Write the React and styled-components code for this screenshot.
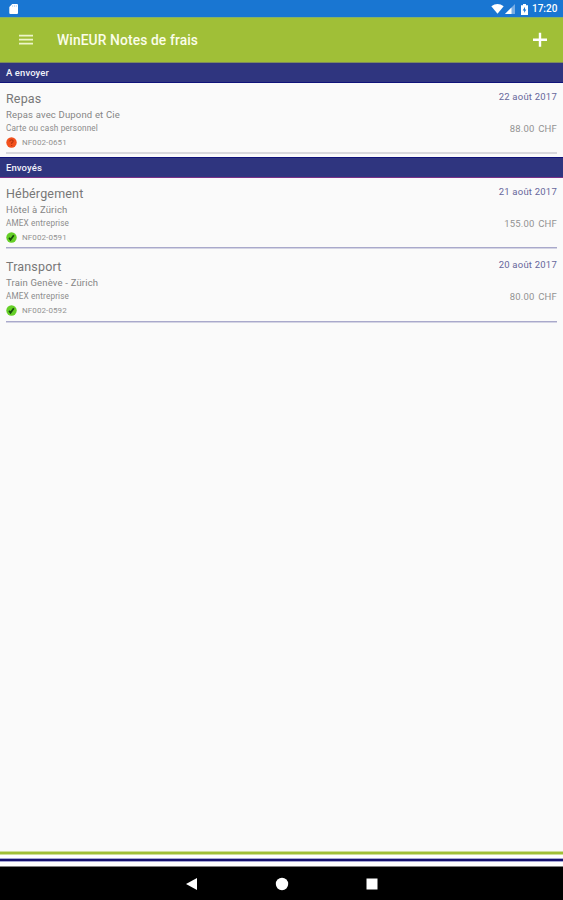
import React from 'react';
import styled, { createGlobalStyle } from 'styled-components';

const GlobalStyle = createGlobalStyle`
	body {
		margin: 0;
		background: #fafafa;
		font-family: Roboto, sans-serif;
	}

	* {
		box-sizing: border-box;
	}
`;

const Screen = styled.div`
	display: flex;
	flex-direction: column;
	height: 900px;
	overflow: hidden;
`;

const StatusBar = styled.div`
	display: flex;
	align-items: center;
	flex: none;
	height: 17px;
	padding: 1px 5px 0 9px;
	background: #1976d2;
	color: #fff;
`;

const StatusIcons = styled.div`
	display: flex;
	align-items: center;
	margin-left: auto;
`;

const Clock = styled.span`
	width: 26px;
	margin-left: 4px;
	font-size: 10px;
	font-weight: 500;
	line-height: 16px;
	white-space: nowrap;
`;

const AppBar = styled.header`
	display: flex;
	align-items: center;
	flex: none;
	height: 46px;
	padding: 0 15px 0 19px;
	border-top: 1px solid #83b169;
	border-bottom: 1px solid #7d8c5b;
	background: #a0bf37;
`;

const Title = styled.h1`
	flex: 1;
	margin: 0 0 0 24px;
	color: #fbfde9;
	font-size: 13.8px;
	font-weight: 500;
	line-height: 20px;
	letter-spacing: 0.12px;
`;

const SectionHeader = styled.h2`
	flex: none;
	height: ${({ $height }) => $height}px;
	margin: 0;
	padding-left: 6px;
	border-top: ${({ $edge }) => ($edge === 'top' ? '1px solid #10137a' : 'none')};
	border-bottom: 1px solid ${({ $edge }) => ($edge === 'top' ? '#7b3188' : '#10137a')};
	background: #2f357f;
	color: #f2f2fa;
	font-size: 9.5px;
	font-weight: 500;
	line-height: ${({ $edge }) => ($edge === 'top' ? 19 : 20)}px;
	letter-spacing: 0.1px;
`;

const Expense = styled.article`
	display: grid;
	grid-template-columns: 1fr auto;
	grid-template-rows: 17px 14px 13px 15px;
	align-items: center;
	flex: none;
	height: 69px;
	margin: 0 6px;
	padding-top: 7px;

	/* stacked rows sit a little closer to the line above them */
	hr + & {
		padding-top: 6px;
	}
`;

const Name = styled.h3`
	margin: 0;
	color: #777;
	font-size: 12.5px;
	font-weight: 400;
	letter-spacing: 0.17px;
`;

const ExpenseDate = styled.span`
	margin-top: -5px;
	color: #66669a;
	font-size: 9.5px;
	letter-spacing: 0.22px;
	text-align: right;
`;

const Description = styled.span`
	grid-column: 1 / 3;
	color: #858585;
	font-size: 9.5px;
	letter-spacing: 0.17px;
`;

const Payment = styled.span`
	color: #8b8b8b;
	font-size: 8.2px;
	letter-spacing: 0.15px;
`;

const Amount = styled.span`
	margin-top: 1px;
	color: #929292;
	font-size: 9.5px;
	letter-spacing: 0.2px;
	word-spacing: 1px;
	text-align: right;
`;

const Reference = styled.span`
	display: flex;
	align-items: center;
	gap: 5px;
	margin-top: 2px;
	color: #929292;
	font-size: 8px;
	letter-spacing: 0.1px;
`;

const Divider = styled.hr`
	flex: none;
	width: 551px;
	height: 2px;
	margin: 0 6px 3px;
	border: none;
	background: ${({ $sent }) =>
		$sent ? 'linear-gradient(#a9a9cb 50%, #d4d4e4 50%)' : '#d8d8dc'};
`;

const Footer = styled.footer`
	flex: none;
	height: 16px;
	margin-top: auto;
	border-bottom: 1px solid #808080;
	background: #fff;
`;

const Stripe = styled.div`
	height: 4px;
	margin-bottom: 3px;
	border: 1px solid ${({ $edge }) => $edge};
	border-width: 1px 0;
	background: ${({ $color }) => $color};
`;

const NavBar = styled.nav`
	display: flex;
	align-items: center;
	justify-content: center;
	gap: 76px;
	flex: none;
	height: 33px;
	background: #000;
`;

const SdCardIcon = () => (
	<svg width="10" height="12" viewBox="0 0 10 12">
		<path d="M3.2 1H8q1 0 1 1v8q0 1-1 1H1.3q-1 0-1-1V4z" fill="#fff" />
		<path d="M3.6 2v2M5.5 2v2M7.3 2v2" stroke="#9fc7ee" strokeWidth=".6" />
	</svg>
);

const WifiIcon = () => (
	<svg width="13" height="10" viewBox="0 0 13 10">
		<path d="M.3 2.2Q6.5-2 12.7 2.2L6.5 9.8z" fill="#fff" />
	</svg>
);

const SignalIcon = styled.svg`
	margin-left: 1px;
`;

const BatteryIcon = styled.svg`
	margin-left: 5px;
`;

const MenuIcon = () => (
	<svg width="14" height="12" viewBox="0 0 14 12">
		<path d="M0 1.7h14M0 5.7h14M0 9.7h14" stroke="#edf5c9" strokeWidth="1.7" />
	</svg>
);

const PlusIcon = () => (
	<svg width="16" height="16" viewBox="0 0 16 16">
		<path d="M1 7.7h14M8 .7v14" stroke="#fff" strokeWidth="2.4" />
	</svg>
);

const StateIcon = ({ sent }) => (
	<svg width="11" height="11" viewBox="0 0 11 11">
		<circle cx="5.5" cy="5.5" r="5.2" fill={sent ? '#65cf27' : '#f3511d'} />
		{sent ? (
			<path
				d="M3.1 5.8L4.5 7.8L7.8 3.2"
				fill="none"
				stroke="#174d0c"
				strokeWidth="1.8"
			/>
		) : (
			<path
				d="M3.5 4.3Q5.5 1.8 7.2 3.8Q7.3 5 5.7 5.8V7M5.7 8v1"
				fill="none"
				stroke="#b8360e"
				strokeWidth="1.2"
			/>
		)}
	</svg>
);

const pending = [
	{
		id: 'NF002-0651',
		name: 'Repas',
		description: 'Repas avec Dupond et Cie',
		payment: 'Carte ou cash personnel',
		date: '22 août 2017',
		amount: '88.00 CHF',
	},
];

const sent = [
	{
		id: 'NF002-0591',
		name: 'Hébérgement',
		description: 'Hôtel à Zürich',
		payment: 'AMEX entreprise',
		date: '21 août 2017',
		amount: '155.00 CHF',
	},
	{
		id: 'NF002-0592',
		name: 'Transport',
		description: 'Train Genève - Zürich',
		payment: 'AMEX entreprise',
		date: '20 août 2017',
		amount: '80.00 CHF',
	},
];

const ExpenseRow = ({ data, isSent }) => (
	<>
		<Expense>
			<Name>{data.name}</Name>
			<ExpenseDate>{data.date}</ExpenseDate>
			<Description>{data.description}</Description>
			<Payment>{data.payment}</Payment>
			<Amount>{data.amount}</Amount>
			<Reference>
				<StateIcon sent={isSent} />
				{data.id}
			</Reference>
		</Expense>
		<Divider $sent={isSent} />
	</>
);

const App = () => (
	<Screen>
		<GlobalStyle />
		<StatusBar>
			<SdCardIcon />
			<StatusIcons>
				<WifiIcon />
				<SignalIcon width="11" height="10" viewBox="0 0 11 10">
					<path d="M0 10L10 0v10z" fill="#78aee5" />
					<path d="M0 10L6.5 3.5V10z" fill="#fff" />
				</SignalIcon>
				<BatteryIcon width="7" height="11" viewBox="0 0 7 11">
					<path d="M2 0h3v1.2h2V11H0V1.2h2z" fill="#fff" />
					<path d="M4 2.8L1.7 6.5h1.5V9L5.3 5.4H4z" fill="#1976d2" />
				</BatteryIcon>
				<Clock>17:20</Clock>
			</StatusIcons>
		</StatusBar>
		<AppBar>
			<MenuIcon />
			<Title>WinEUR Notes de frais</Title>
			<PlusIcon />
		</AppBar>

		<SectionHeader $height={20}>A envoyer</SectionHeader>
		{pending.map((expense) => (
			<ExpenseRow key={expense.id} data={expense} />
		))}
		<SectionHeader $height={21} $edge="top">
			Envoyés
		</SectionHeader>
		{sent.map((expense) => (
			<ExpenseRow key={expense.id} data={expense} isSent />
		))}

		<Footer>
			<Stripe $color="#a0bf37" $edge="#cfdf9b" />
			<Stripe $color="#15116f" $edge="#a6a8d4" />
		</Footer>
		<NavBar>
			<svg width="14" height="14" viewBox="0 0 14 14">
				<path d="M1 7L12 1v12z" fill="#fff" />
			</svg>
			<svg width="14" height="14" viewBox="0 0 14 14">
				<circle cx="7" cy="7" r="6.2" fill="#fff" />
			</svg>
			<svg width="14" height="14" viewBox="0 0 14 14">
				<path d="M1.5 1.5h11v11h-11z" fill="#fff" />
			</svg>
		</NavBar>
	</Screen>
);

export default App;
